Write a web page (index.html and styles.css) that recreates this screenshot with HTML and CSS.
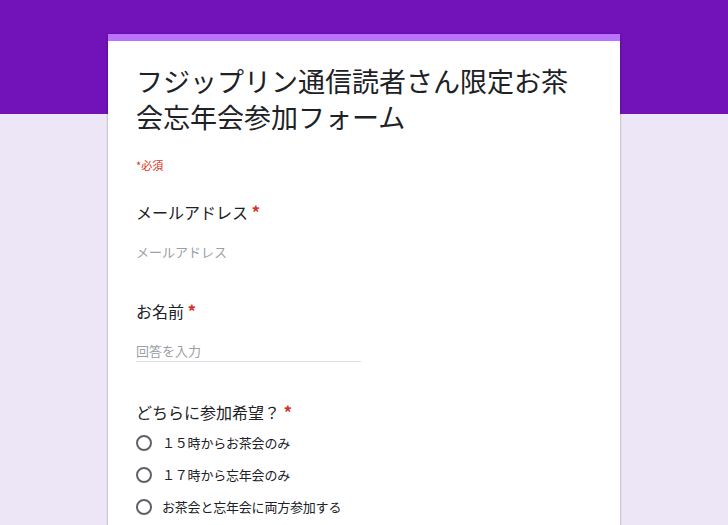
FILE: index.html
```html
<!DOCTYPE html>
<html lang="ja">
<head>
<meta charset="utf-8">
<title>フジップリン通信読者さん限定お茶会忘年会参加フォーム</title>
<link rel="stylesheet" href="styles.css">
</head>
<body>
<div class="page">
  <div class="hero"></div>
  <main class="card">
    <div class="accent"></div>
    <div class="body">
      <h1 class="title">フジップリン通信読者さん限定お茶会忘年会参加フォーム</h1>
      <div class="required-note">*必須</div>

      <section class="q q-email">
        <div class="label">メールアドレス <span class="star">*</span></div>
        <div class="placeholder">メールアドレス</div>
      </section>

      <section class="q q-name">
        <div class="label">お名前 <span class="star">*</span></div>
        <div class="input"><span class="placeholder">回答を入力</span></div>
      </section>

      <section class="q q-choice">
        <div class="label">どちらに参加希望？ <span class="star">*</span></div>
        <div class="options">
          <label class="opt"><span class="radio"></span><span class="opt-text">１５時からお茶会のみ</span></label>
          <label class="opt"><span class="radio"></span><span class="opt-text">１７時から忘年会のみ</span></label>
          <label class="opt"><span class="radio"></span><span class="opt-text">お茶会と忘年会に両方参加する</span></label>
        </div>
      </section>
    </div>
  </main>
</div>
</body>
</html>
```
FILE: styles.css
```css
* { box-sizing: border-box; }
html, body { margin: 0; padding: 0; }
body {
  background: #ede6f6;
  font-family: "Noto Sans CJK JP", "Noto Sans", Roboto, sans-serif;
  color: #202124;
  overflow: hidden;
  height: 525px;
}
.page { position: relative; }
.hero {
  height: 114px;
  background: #7113b8;
}
.card {
  position: relative;
  margin: -80px auto 0;
  width: 512px;
  background: #fff;
  box-shadow: 0 1px 2px rgba(0,0,0,0.2), 1px 0 2px rgba(0,0,0,0.08), -1px 0 2px rgba(0,0,0,0.08);
  min-height: 500px;
}
.accent { height: 7px; background: #b972fb; }
.body { padding: 22px 40px 0 28px; }
.title {
  margin: 0;
  font-weight: 400;
  font-size: 27px;
  line-height: 36px;
  color: #202124;
}
.required-note {
  margin-top: 22px;
  font-size: 11px;
  line-height: 16px;
  color: #d93025;
}
.label {
  font-size: 16px;
  line-height: 24px;
  color: #202124;
}
.star { color: #d93025; font-size: 17px; font-weight: 700; }
.q-email { margin-top: 27px; }
.q-email .placeholder { margin-top: 18px; }
.placeholder {
  font-size: 13px;
  line-height: 20px;
  color: #9aa0a6;
}
.q-name { margin-top: 37px; }
.input {
  margin-top: 14px;
  width: 225px;
  border-bottom: 1px solid #dadce0;
}
.q-choice { margin-top: 38px; }
.options { margin-top: 9px; display: flex; flex-direction: column; gap: 12px; }
.opt { display: flex; align-items: center; gap: 10px; height: 20px; }
.radio {
  width: 16px; height: 16px;
  border: 2px solid #5f6368;
  border-radius: 50%;
  flex: none;
}
.opt-text { font-size: 13px; line-height: 20px; color: #202124; letter-spacing: -0.2px; }
```
